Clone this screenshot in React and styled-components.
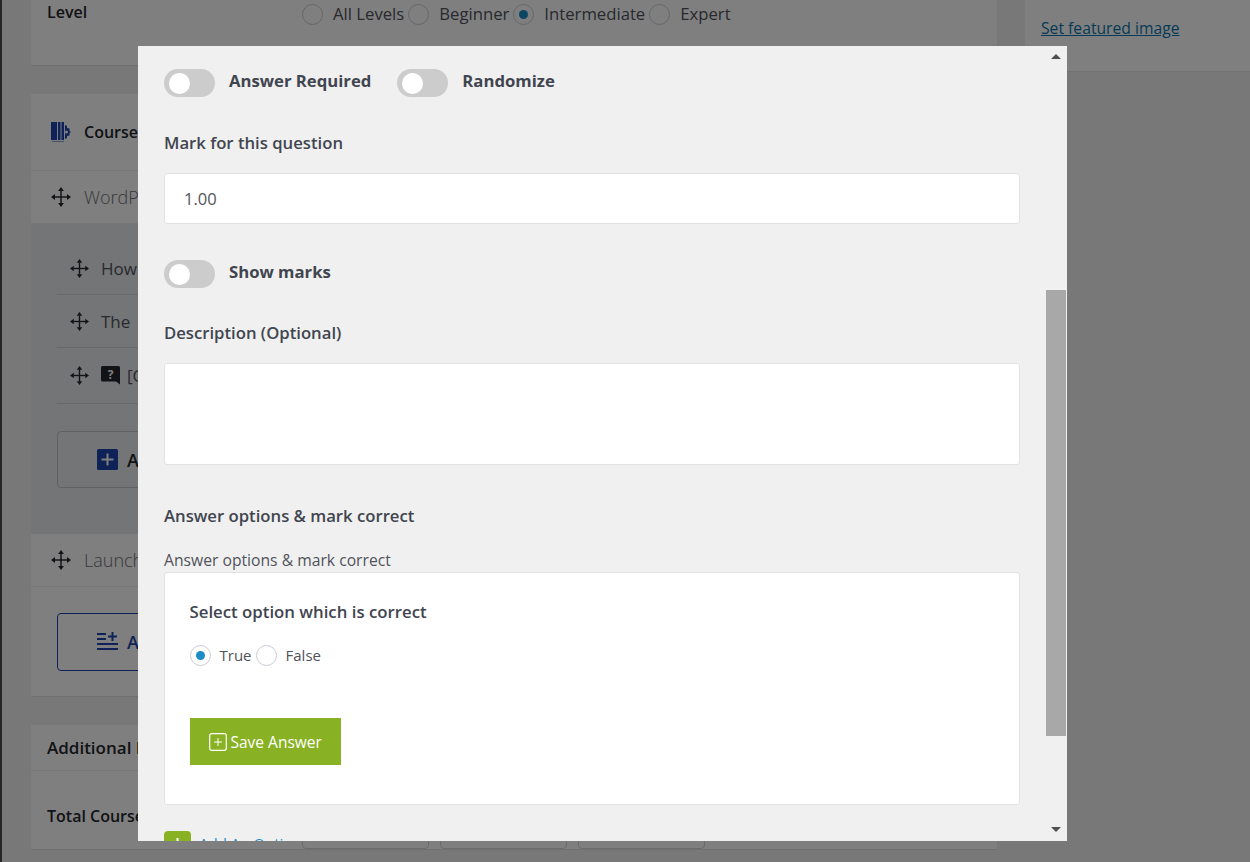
import React from "react";
import styled, { createGlobalStyle } from "styled-components";

const GlobalStyle = createGlobalStyle`
  html, body {
    margin: 0;
    height: 100%;
    overflow: hidden;
    background: #f0f0f1;
    font-family: "Open Sans", "Noto Sans", sans-serif;
    color: #41454f;
  }
  * { box-sizing: border-box; }
`;

// Page behind the modal
const Page = styled.div`
  display: flex;
  height: 862px;
  overflow: hidden;
  border-left: 2px solid #4a4e55;
`;

const MainColumn = styled.div`
  width: 966px;
  margin-left: 29px;
  display: flex;
  flex-direction: column;
  gap: 28px;
  flex-shrink: 0;
`;

const SideColumn = styled.div`
  width: 225px;
  margin-left: 28px;
  flex-shrink: 0;
`;

const SideCard = styled.div`
  height: 72px;
  background: #fff;
  padding: 17px 16px;
  border-bottom: 1px solid #e4e4e6;
`;

const FeaturedLink = styled.a`
  font-size: 15.7px;
  line-height: 22px;
  color: #0a75ad;
  text-decoration: underline;
`;

const Card = styled.section`
  background: #fff;
  border-bottom: 1px solid #e0e0e2;
  flex-shrink: 0;
`;

const LevelCard = styled(Card)`
  height: 66px;
  padding: 0 16px;
  display: flex;
`;

const FieldName = styled.div`
  width: 255px;
  font-size: 16px;
  line-height: 24px;
  font-weight: 600;
  color: #23262d;
`;

const LevelName = styled(FieldName)`
  height: 24px;
`;

const RadioRow = styled.div`
  display: flex;
  align-items: center;
  height: 28px;
`;

const RadioDot = styled.input.attrs({ type: "radio", readOnly: true })`
  appearance: none;
  width: 21px;
  height: 21px;
  margin: 0;
  flex-shrink: 0;
  border-radius: 50%;
  border: 1.5px solid #c9ccd3;
  background: #fff;
  display: grid;
  place-items: center;

  &:checked::before {
    content: "";
    width: 9px;
    height: 9px;
    border-radius: 50%;
    background: #1b8cc6;
  }
`;

const RadioText = styled.span`
  font-size: 16.7px;
  line-height: 22px;
  color: #50535c;
  margin-left: 10px;
  margin-right: 4px;
`;

const CardHeader = styled.div`
  height: 77px;
  padding: 0 20px;
  display: flex;
  align-items: center;
  gap: 13px;
  font-size: 16px;
  font-weight: 600;
  color: #23262d;
  border-bottom: 1px solid #eeeff1;
`;

const TopicRow = styled.div`
  height: ${(p) => p.$height}px;
  padding: 0 20px;
  display: flex;
  align-items: center;
  gap: 13px;
  font-size: 18px;
  font-weight: 300;
  color: #6f7178;
  border-bottom: 1px solid #eeeff1;
`;

const TopicBody = styled.div`
  height: 310px;
  background: #e9eaee;
  padding: 18px 26px 0;
`;

const LessonRow = styled.div`
  height: ${(p) => p.$height}px;
  padding-left: 13px;
  display: flex;
  align-items: center;
  gap: 12px;
  font-size: 17px;
  color: #50535c;
  border-bottom: 1px solid #d3d4d9;
`;

const QuestionMark = styled.span`
  display: flex;
  margin-right: -5px;
`;

const OutlineButton = styled.div`
  width: 300px;
  height: ${(p) => (p.$blue ? 58 : 57)}px;
  margin-top: ${(p) => p.$top || 0}px;
  display: flex;
  align-items: center;
  gap: 9px;
  padding-left: 39px;
  border: 1.5px solid ${(p) => (p.$blue ? "#1c45b0" : "#c2c3c9")};
  border-radius: 4px;
  font-size: 18px;
  font-weight: 600;
  color: ${(p) => (p.$blue ? "#1c45b0" : "#23262d")};
`;

const CourseFooter = styled.div`
  padding: 26px 26px 25px;
`;

const AdditionalHeader = styled.div`
  height: 46px;
  padding: 0 16px;
  display: flex;
  align-items: center;
  font-size: 17px;
  font-weight: 600;
  color: #23262d;
  border-bottom: 1px solid #eeeff1;
`;

const DurationRow = styled.div`
  display: flex;
  padding: 33px 16px 0;
`;

const DurationInputs = styled.div`
  display: flex;
  gap: 11px;
`;

const DurationBox = styled.div`
  width: 127px;
  height: 45px;
  border: 1.5px solid #d8d9dc;
  border-radius: 4px;
  background: #fff;
`;

// Modal
const Overlay = styled.div`
  position: fixed;
  inset: 0;
  background: rgba(0, 0, 0, 0.5);
`;

const Modal = styled.div`
  position: fixed;
  left: 138px;
  top: 46px;
  width: 929px;
  height: 795px;
  background: #f0f0f0;
  overflow: hidden;
  padding: 23px 0 0 26px;
`;

const Scrollbar = styled.div`
  position: absolute;
  top: 0;
  right: 1px;
  bottom: 0;
  width: 20px;
`;

const ScrollThumb = styled.div`
  position: absolute;
  left: 0;
  right: 0;
  top: 244px;
  height: 446px;
  background: #a8a8a8;
`;

const ScrollArrow = styled.div`
  position: absolute;
  left: 5px;
  width: 0;
  height: 0;
  border-left: 5px solid transparent;
  border-right: 5px solid transparent;
  ${(p) =>
    p.$up
      ? "top: 8px; border-bottom: 5px solid #505050;"
      : "bottom: 9px; border-top: 5px solid #505050;"}
`;

const Content = styled.div`
  width: 856px;
`;

const ToggleRow = styled.div`
  display: flex;
  align-items: center;
  gap: 26px;
  margin-top: ${(p) => p.$top || 0}px;
`;

const ToggleField = styled.div`
  display: flex;
  align-items: center;
  gap: 14px;
`;

const Toggle = styled.span`
  width: 51px;
  height: 28px;
  border-radius: 14px;
  background: #cccccc;
  padding: 4px 5px;
  display: block;

  &::before {
    content: "";
    display: block;
    width: 21px;
    height: 21px;
    border-radius: 50%;
    background: #fff;
  }
`;

const ToggleLabel = styled.span`
  font-size: 16.7px;
  line-height: 24px;
  font-weight: 700;
  color: #41454f;
  margin-top: -4px;
`;

const FormLabel = styled.div`
  font-size: 16.7px;
  line-height: 24px;
  font-weight: 600;
  color: #41454f;
  margin-top: ${(p) => p.$top}px;
`;

const SmallLabel = styled.div`
  font-size: 15.7px;
  line-height: 22px;
  color: #50535c;
  margin-top: 21px;
  padding-bottom: 1px;
`;

const TextInput = styled.input`
  display: block;
  width: 100%;
  height: 51px;
  margin-top: 18px;
  padding: 0 19px;
  border: 1.5px solid #e2e2e2;
  border-radius: 3px;
  background: #fff;
  font: 16.5px "Open Sans", "Noto Sans", sans-serif;
  color: #50535c;
  outline: none;
`;

const TextArea = styled.textarea`
  display: block;
  width: 100%;
  height: 102px;
  margin-top: 18px;
  border: 1.5px solid #e2e2e2;
  border-radius: 3px;
  background: #fff;
  resize: none;
  outline: none;
`;

const AnswerBox = styled.div`
  height: 233px;
  padding: 27px 24.5px 0;
  background: #fff;
  border: 1.5px solid #e2e2e2;
  border-radius: 3px;
`;

const AnswerTitle = styled.div`
  font-size: 16.8px;
  line-height: 24px;
  font-weight: 600;
  color: #41454f;
`;

const AnswerRadios = styled(RadioRow)`
  margin-top: 18px;
  height: 26px;
`;

const AnswerRadioText = styled(RadioText)`
  font-size: 15px;
  margin-left: 9px;
  margin-right: ${(p) => p.$gap || 0}px;
`;

const SaveButton = styled.div`
  width: 151px;
  height: 47px;
  margin-top: 50px;
  padding-left: 19px;
  display: flex;
  align-items: center;
  gap: 4px;
  background: #88b223;
  color: #fff;
  font-size: 15.5px;
`;

const AddOption = styled.div`
  display: flex;
  gap: 8px;
  margin-top: 26px;
  color: #1b8cc6;
  font-size: 15px;
  line-height: 20px;
`;

const AddOptionIcon = styled.span`
  width: 27px;
  height: 27px;
  border-radius: 4px;
  background: #88b223;
  display: grid;
  place-items: center;
`;

const AddOptionText = styled.span`
  padding-top: 2px;
`;

const MoveIcon = ({ size = 20 }) => (
  <svg width={size} height={size} viewBox="0 0 22 22" fill="#23262d">
    <path d="M10.2 4h1.6v14h-1.6z" />
    <path d="M4 10.2h14v1.6H4z" />
    <path d="M11 0l3.2 4.4H7.8zM11 22l-3.2-4.4h6.4zM0 11l4.4-3.2v6.4zM22 11l-4.4 3.2V7.8z" />
  </svg>
);

const BuilderIcon = () => (
  <svg width="20" height="20" viewBox="0 0 20 20" fill="#1c45b0">
    <path d="M0 0h6v18H0zM7 0h2.500v18H7zM10.500 0h2.500v18h-2.500z" />
    <path d="M14 3l2 1v2l2.500.5V9l1.500 1-1.500 1v2.500L16 14v2l-2 1z" />
    <path d="M1 19h12v1H1z" opacity="0.5" />
    <circle cx="15.500" cy="10" r="1.500" fill="#fff" />
  </svg>
);

const QuestionIcon = () => (
  <svg width="19" height="19" viewBox="0 0 19 19">
    <path d="M1.500 0h16A1.500 1.500 0 0 1 19 1.500V18.500l-4-3H1.500A1.500 1.500 0 0 1 0 14V1.500A1.500 1.500 0 0 1 1.500 0z" fill="#23262d" />
    <text x="9.500" y="12.500" textAnchor="middle" fontSize="12" fontWeight="700" fill="#fff" fontFamily="Open Sans">?</text>
  </svg>
);

const PlusSquareIcon = () => (
  <svg width="21" height="21" viewBox="0 0 21 21">
    <rect width="21" height="21" rx="1.500" fill="#1c45b0" />
    <path d="M9.500 4.500h2v5h5v2h-5v5h-2v-5h-5v-2h5z" fill="#fff" />
  </svg>
);

const ListAddIcon = () => (
  <svg width="21" height="20" viewBox="0 0 21 20" fill="#1c45b0">
    <path d="M0 1h9v2H0zM0 6h9v2H0zM0 11h21v2H0zM0 16h21v2H0z" />
    <path d="M14.500 0h2v3.500H20v2h-3.500V9h-2V5.500H11v-2h3.500z" />
  </svg>
);

const SaveIcon = () => (
  <svg width="18" height="18" viewBox="0 0 18 18" fill="none" stroke="#fff">
    <rect x="0.700" y="0.700" width="16.600" height="16.600" rx="2" strokeWidth="1.200" />
    <path d="M9 5v8M5 9h8" strokeWidth="1" />
  </svg>
);

const App = () => {
  return (
    <>
      <GlobalStyle />
      <Page>
        <MainColumn>
          <LevelCard>
            <LevelName>Level</LevelName>
            <RadioRow>
              <RadioDot name="level" />
              <RadioText>All Levels</RadioText>
              <RadioDot name="level" />
              <RadioText>Beginner</RadioText>
              <RadioDot name="level" defaultChecked />
              <RadioText>Intermediate</RadioText>
              <RadioDot name="level" />
              <RadioText>Expert</RadioText>
            </RadioRow>
          </LevelCard>
          <Card>
            <CardHeader>
              <BuilderIcon />
              Course Builder
            </CardHeader>
            <TopicRow $height={53}>
              <MoveIcon />
              WordPress
            </TopicRow>
            <TopicBody>
              <LessonRow $height={53}>
                <MoveIcon size={19} />
                How
              </LessonRow>
              <LessonRow $height={53}>
                <MoveIcon size={19} />
                The
              </LessonRow>
              <LessonRow $height={56}>
                <MoveIcon size={19} />
                <QuestionMark>
                  <QuestionIcon />
                </QuestionMark>
                [Q
              </LessonRow>
              <OutlineButton $top={27}>
                <PlusSquareIcon />
                Add
              </OutlineButton>
            </TopicBody>
            <TopicRow $height={53}>
              <MoveIcon />
              Launch
            </TopicRow>
            <CourseFooter>
              <OutlineButton $blue>
                <ListAddIcon />
                Add
              </OutlineButton>
            </CourseFooter>
          </Card>
          <Card>
            <AdditionalHeader>Additional Data</AdditionalHeader>
            <DurationRow>
              <FieldName>Total Course Duration</FieldName>
              <DurationInputs>
                <DurationBox />
                <DurationBox />
                <DurationBox />
              </DurationInputs>
            </DurationRow>
          </Card>
        </MainColumn>
        <SideColumn>
          <SideCard>
            <FeaturedLink href="#">Set featured image</FeaturedLink>
          </SideCard>
        </SideColumn>
      </Page>
      <Overlay />
      <Modal>
        <Content>
          <ToggleRow>
            <ToggleField>
              <Toggle />
              <ToggleLabel>Answer Required</ToggleLabel>
            </ToggleField>
            <ToggleField>
              <Toggle />
              <ToggleLabel>Randomize</ToggleLabel>
            </ToggleField>
          </ToggleRow>
          <FormLabel $top={34}>Mark for this question</FormLabel>
          <TextInput defaultValue="1.00" />
          <ToggleRow $top={36}>
            <ToggleField>
              <Toggle />
              <ToggleLabel>Show marks</ToggleLabel>
            </ToggleField>
          </ToggleRow>
          <FormLabel $top={33}>Description (Optional)</FormLabel>
          <TextArea />
          <FormLabel $top={39}>Answer options &amp; mark correct</FormLabel>
          <SmallLabel>Answer options &amp; mark correct</SmallLabel>
          <AnswerBox>
            <AnswerTitle>Select option which is correct</AnswerTitle>
            <AnswerRadios>
              <RadioDot name="correct" defaultChecked />
              <AnswerRadioText $gap={4}>True</AnswerRadioText>
              <RadioDot name="correct" />
              <AnswerRadioText>False</AnswerRadioText>
            </AnswerRadios>
            <SaveButton>
              <SaveIcon />
              Save Answer
            </SaveButton>
          </AnswerBox>
          <AddOption>
            <AddOptionIcon>
              <svg width="13" height="13" viewBox="0 0 13 13" fill="#fff">
                <path d="M5.500 0h2v5.500H13v2H7.500V13h-2V7.500H0v-2h5.500z" />
              </svg>
            </AddOptionIcon>
            <AddOptionText>Add An Option</AddOptionText>
          </AddOption>
        </Content>
        <Scrollbar>
          <ScrollArrow $up />
          <ScrollThumb />
          <ScrollArrow />
        </Scrollbar>
      </Modal>
    </>
  );
};

export default App;
